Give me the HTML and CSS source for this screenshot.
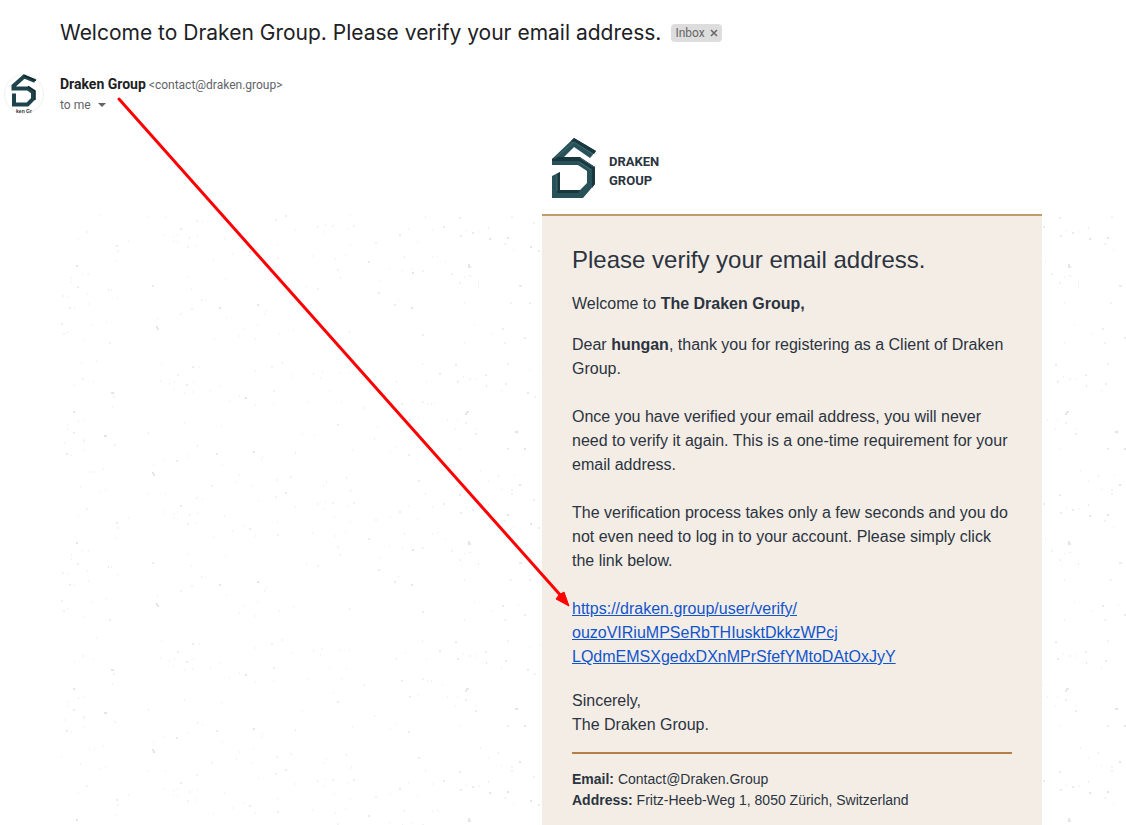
FILE: index.html
```html
<!DOCTYPE html>
<html lang="en">
<head>
    <meta charset="UTF-8">
    <meta name="viewport" content="width=device-width, initial-scale=1.0">
    <title>Welcome to Draken Group. Please verify your email address.</title>
    <link rel="stylesheet" href="styles.css">
</head>
<body>
    <header class="subject">
        <h1>Welcome to Draken Group. Please verify your email address.</h1>
        <span class="label">Inbox <button type="button" aria-label="Remove label Inbox"><svg width="8" height="8" viewBox="0 0 8 8"><path d="M1 1l6 6M7 1l-6 6" stroke="#666" stroke-width="1.5"/></svg></button></span>
    </header>

    <section class="sender">
        <svg class="avatar" viewBox="0 0 40 40">
            <circle cx="20" cy="20" r="19.5" fill="#fff" stroke="#efefef"/>
            <path d="M31 7L20 2.500L9.500 12V14.500H24L29 18V25L23.500 30.500H10V19.500" fill="none" stroke="#1c444a" stroke-width="4"/>
            <path d="M20 1.500L32 6.500M24 12.500L31 17V26" fill="none" stroke="#12292e" stroke-width="1.500"/>
            <text x="20" y="39" text-anchor="middle" font-size="5" font-weight="bold" fill="#333">ken Gr</text>
        </svg>
        <div class="sender-info">
            <div class="from"><strong>Draken Group</strong> <span>&lt;contact@draken.group&gt;</span></div>
            <button type="button" class="to">to me <i class="caret"></i></button>
        </div>
    </section>

    <main class="email">
        <div class="email-header">
            <div class="brand">
                <svg width="44" height="60" viewBox="0 0 44 60">
                    <path d="M22 0L44 13L38 20L22 9L11 20H28L43 29V46L31 60H0V38L8 34V52H28L35 45V33L26 27H0V21Z" fill="#27525a"/>
                    <path d="M22 0L44 13L42 16L22 4L19 3ZM3 19H28L43 29V46L40 50V31L27 23H0V21ZM5 36L8 34V52L5 53ZM5 53L8 52H28L26 55H5Z" fill="#18383e"/>
                    <path d="M2 21L22 4L41 16M28 20L42 29M5 37V53M27 24L39 32" fill="none" stroke="#4f7478" stroke-width="0.7"/>
                </svg>
                <div class="brand-name">DRAKEN<br>GROUP</div>
            </div>
        </div>
        <div class="email-body">
            <article class="card">
                <h2>Please verify your email address.</h2>
                <p class="lead">Welcome to <strong>The Draken Group,</strong></p>
                <p>Dear <strong>hungan</strong>, thank you for registering as a Client of Draken Group.</p>
                <p>Once you have verified your email address, you will never need to verify it again. This is a one-time requirement for your email address.</p>
                <p>The verification process takes only a few seconds and you do not even need to log in to your account. Please simply click the link below.</p>
                <p class="verify"><a href="#">https://draken.group/user/verify/<br>ouzoVIRiuMPSeRbTHIusktDkkzWPcj<br>LQdmEMSXgedxDXnMPrSfefYMtoDAtOxJyY</a></p>
                <p class="closing">Sincerely,<br>The Draken Group.</p>
                <footer>
                    <strong>Email:</strong> Contact@Draken.Group<br>
                    <strong>Address:</strong> Fritz-Heeb-Weg 1, 8050 Zürich, Switzerland
                </footer>
            </article>
        </div>
    </main>

    <!-- red arrow from the sender to the verification link -->
    <svg class="arrow" width="460" height="516" viewBox="0 0 460 516">
        <path d="M4 3L447 501" stroke="#f00" stroke-width="3" stroke-linecap="round"/>
        <path d="M454 510L441 503L444 499L449 496Z" fill="#f00" stroke="#f00" stroke-width="1"/>
    </svg>
</body>
</html>
```
FILE: styles.css
```css
* {
    box-sizing: border-box;
}
body {
    margin: 0;
    overflow: hidden;
    position: relative;
    background: #fff;
    font-family: Roboto, sans-serif;
    color: #202124;
}
h1, h2, p {
    margin: 0;
    font-weight: normal;
}
button {
    padding: 0;
    border: 0;
    background: none;
    color: inherit;
    font: inherit;
    cursor: pointer;
}

/* Subject line */
.subject {
    display: flex;
    align-items: center;
    gap: 10px;
    padding: 19px 20px 0 60px;
}
.subject h1 {
    font-family: Inter, sans-serif;
    font-size: 21px;
    line-height: 28px;
}
.label {
    display: flex;
    align-items: center;
    gap: 5px;
    height: 18px;
    padding: 0 4px;
    border-radius: 4px;
    background: #ddd;
    color: #666;
    font-size: 12px;
}
.label svg {
    display: block;
}

/* Sender */
.sender {
    display: flex;
    gap: 16px;
    padding: 27px 4px 0;
}
.avatar {
    width: 40px;
    height: 40px;
    font-family: "Liberation Sans", sans-serif;
}
.from, .to {
    font-size: 12px;
    line-height: 20px;
    color: #5f6368;
}
.from strong {
    font-size: 14px;
    color: #202124;
}
.to {
    display: flex;
    align-items: center;
    gap: 7px;
}
.caret {
    border: 4px solid transparent;
    border-top-color: #5f6368;
    border-bottom: 0;
}

/* Email */
.email {
    margin-left: 60px;
    font-family: "Liberation Sans", Arial, sans-serif;
    color: #2b3440;
}
.email-header, .email-body {
    display: flex;
    justify-content: flex-end;
    padding-right: 84px;
}
.brand {
    display: flex;
    align-items: center;
    gap: 13px;
    width: 500px;
    padding: 23px 10px 16px;
}
.brand-name {
    padding-top: 6px;
    font-family: Roboto, sans-serif;
    font-size: 13px;
    font-weight: bold;
    line-height: 19px;
}
/* speckled paper, 600 x 277 tile */
.email-body {
    background: url("data:image/svg+xml,%3Csvg xmlns='http://www.w3.org/2000/svg' width='600' height='277'%3E\
%3Cpath stroke='%23f3f3f3' stroke-width='2' d='M39 1h1M88 3h1M105 3h1M26 18h2M18 25h1M57 37h2M56 47h1M68 27h1M136 7h2M142 8h1M103 21h1M113 23h1M117 21h1M113 27h1M117 28h1M127 33h2M136 32h1M137 22h1M164 25h1M183 35h1M172 40h1M198 10h1M215 6h2M235 16h1M217 31h1M217 44h2M195 45h1M153 46h1\
M22 60h1M11 64h1M11 68h1M28 60h1M27 80h1M2 82h2M8 83h1M14 94h1M28 90h1M51 76h1M57 84h1M128 63h1M131 75h1M145 87h1M165 65h1M131 95h2M120 100h2M166 104h1M206 97h1M204 100h1M97 105h1M46 108h1M1 110h2M3 120h2M7 118h1M32 111h1M24 126h1M49 129h2M154 125h1M183 115h1M197 111h1M179 122h1M195 125h1M219 120h1M233 116h1\
M36 147h1M21 149h1M22 165h2M14 171h1M33 168h1M53 183h2M52 193h1M101 150h1M139 153h1M117 161h2M109 170h1M114 168h1M100 167h1M124 179h1M132 178h1M133 168h1M113 175h1M160 172h1M150 177h1M179 182h1M169 187h1M195 157h1M211 153h2M231 162h1M213 177h2M213 190h1M195 191h1M24 206h1M7 211h1M7 215h1M23 225h1M124 209h1M161 212h1\
M4 229h1M11 241h1M23 227h2M24 236h1M54 231h2M43 255h1M29 258h1M34 258h1M1 266h1M20 273h1M127 242h1M142 234h1M162 251h1M151 272h2M179 261h1M193 258h1M202 243h1M201 246h1M192 272h1M176 268h1M216 266h2M230 263h2M103 246h1M93 251h1M45 276h1\
M290 1h1M265 11h1M272 12h2M288 15h1M293 12h2M263 18h1M274 26h1M290 31h1M315 29h2M330 26h1M348 15h1M357 28h1M372 16h1M406 17h1M419 18h1M444 30h2M451 3h2M453 36h1M473 9h2M252 42h1M285 41h1M275 45h1M277 56h2M342 57h1M351 55h1M362 57h2M372 43h1M377 42h1M385 48h1M329 55h1M391 60h2M404 63h1M409 62h2M399 69h2M418 69h1M401 74h1M319 67h1M246 73h1M257 75h2M338 86h1M450 89h2M404 89h1M414 111h1M432 120h1M458 114h1M444 129h2M404 129h1\
M447 150h2M469 156h1M479 154h1M403 163h1M409 165h2M416 165h1M441 177h1M474 183h2M262 158h1M260 164h1M279 159h1M289 159h1M269 177h1M286 178h1M345 162h1M366 168h1M362 188h2M371 190h1M374 189h1M367 190h1M382 194h1M387 206h1M397 206h1M405 209h2M395 215h1M416 215h1M281 188h1M248 188h1M273 202h1M317 213h1M254 221h1M242 220h1M358 204h1\
M330 238h1M335 233h1M292 236h1M266 268h1M263 272h1M291 276h1M365 3h1M400 235h1M454 261h1M441 275h1M451 276h2M420 257h1M428 267h1'/%3E\
%3Cpath stroke='%23ececec' stroke-width='2' d='M56 32h2M120 15h2M129 24h1M189 38h2M225 2h2M17 73h2M9 94h2M92 72h2M141 86h1M132 153h2M126 171h2M222 149h1M18 207h1M13 219h2M88 219h1M6 240h2M116 247h2M137 232h1M156 240h2M235 239h1M257 13h1M339 21h2M365 3h1M383 13h2M399 4h2M400 22h2M412 19h2M428 14h1M478 37h2M308 48h2M280 64h1M344 43h1M418 73h1M318 79h2M334 91h2M459 72h3M469 89h2M289 118h1M362 121h2M442 115h2M464 124h2M362 150h1M395 151h2M379 160h2M397 168h2M425 161h2M445 170h2M467 179h2M253 160h1M336 168h1M341 190h2M415 220h2M304 194h1M277 211h2M314 225h1M349 206h2M348 241h2M286 264h1M358 267h2M447 235h2M438 262h1'/%3E\
%3Cpath stroke='%23e5e5e5' stroke-width='2' d='M16 52h2M48 76h1M159 94h2M197 91h2M96 113h2M97 115h2M51 179h3M185 184h2M13 198h2M44 222h3M92 259h2M93 261h2M193 238h2M429 25h2M447 24h2M470 33h2M352 59h2M351 94h2M408 53h3M408 51h2M426 172h1M405 200h2M406 198h3M455 218h3M464 235h2M459 271h2'/%3E%3C/svg%3E");
}
.card {
    width: 500px;
    padding: 30px 30px 15px;
    border-top: 2px solid #c49a6c;
    background: #f4ede6;
    font-size: 16px;
    line-height: 24px;
}
.card h2 {
    margin-bottom: 18px;
    font-size: 24px;
    line-height: 28px;
}
.card p {
    margin-bottom: 24px;
}
.card .lead {
    margin-bottom: 17px;
}
.card .verify {
    margin-bottom: 20px;
}
.card .closing {
    margin-bottom: 15px;
}
.card a {
    color: #15c;
}
.card footer {
    padding-top: 15px;
    border-top: 2px solid #b47e48;
    font-size: 14px;
    line-height: 21px;
}

.arrow {
    position: absolute;
    top: 96px;
    left: 115px;
    pointer-events: none;
}
```
